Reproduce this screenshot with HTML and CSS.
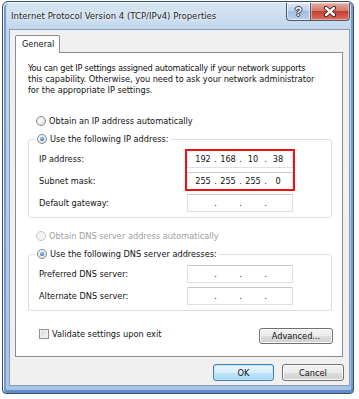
FILE: index.html
```html
<!DOCTYPE html>
<html>
<head>
<meta charset="UTF-8"/>
<title>Internet Protocol Version 4 (TCP/IPv4) Properties</title>
<link rel="stylesheet" href="styles.css">
</head>
<body>
<div class="window">
  <div class="titlebar">
    <span class="title">Internet Protocol Version 4 (TCP/IPv4) Properties</span>
    <div class="caption-btns">
      <span class="cap help">?</span>
      <span class="cap close">
        <svg width="14" height="11" viewBox="0 0 14 11"><path d="M3 2 L11 9 M11 2 L3 9" stroke="#3b1a1a" stroke-width="4.2" stroke-linecap="round"/><path d="M3 2 L11 9 M11 2 L3 9" stroke="#fff" stroke-width="2.4" stroke-linecap="round"/></svg>
      </span>
    </div>
  </div>

  <div class="client">
    <div class="tabs"><span class="tab">General</span></div>
    <div class="panel">
      <p class="intro"><span class="tight">You can get IP settings assigned automatically if your network supports</span><br>this capability. Otherwise, you need to ask your network administrator<br>for the appropriate IP settings.</p>

      <div class="opt ip-auto"><span class="radio"></span>Obtain an IP address automatically</div>
      <fieldset class="group">
        <legend class="opt"><span class="radio on"></span>Use the following IP address:</legend>
        <div class="grid">
          <span class="lbl">IP address:</span>
          <div class="ip"><span class="oct">192</span><span class="dot">.</span><span class="oct">168</span><span class="dot">.</span><span class="oct">10</span><span class="dot">.</span><span class="oct">38</span></div>
          <span class="lbl">Subnet mask:</span>
          <div class="ip"><span class="oct">255</span><span class="dot">.</span><span class="oct">255</span><span class="dot">.</span><span class="oct">255</span><span class="dot">.</span><span class="oct">0</span></div>
          <span class="lbl">Default gateway:</span>
          <div class="ip"><span class="oct"></span><span class="dot">.</span><span class="oct"></span><span class="dot">.</span><span class="oct"></span><span class="dot">.</span><span class="oct"></span></div>
          <div class="mark"></div>
        </div>
      </fieldset>

      <div class="opt off dns-auto"><span class="radio"></span>Obtain DNS server address automatically</div>
      <fieldset class="group">
        <legend class="opt"><span class="radio on"></span>Use the following DNS server addresses:</legend>
        <div class="grid">
          <span class="lbl">Preferred DNS server:</span>
          <div class="ip"><span class="oct"></span><span class="dot">.</span><span class="oct"></span><span class="dot">.</span><span class="oct"></span><span class="dot">.</span><span class="oct"></span></div>
          <span class="lbl">Alternate DNS server:</span>
          <div class="ip"><span class="oct"></span><span class="dot">.</span><span class="oct"></span><span class="dot">.</span><span class="oct"></span><span class="dot">.</span><span class="oct"></span></div>
        </div>
      </fieldset>

      <div class="bottom-row">
        <div class="opt check-row"><span class="check"></span>Validate settings upon exit</div>
        <button class="btn adv">Advanced...</button>
      </div>
    </div>

    <div class="dlg-btns">
      <button class="btn ok">OK</button>
      <button class="btn">Cancel</button>
    </div>
  </div>
</div>
</body>
</html>
```

FILE: styles.css
```css
* {
	box-sizing: border-box;
}
body {
	margin: 0;
	background: #fff;
	font-family: "DejaVu Sans Condensed", "Liberation Sans", sans-serif;
	font-size: 9.15px;
	color: #111;
}

/* window frame */
.window {
	width: 352px;
	height: 393px;
	margin: 1px 0 0 2px;
	padding: 0 3px 7px 6px;
	border: 1px solid #3d4d60;
	border-radius: 6px 6px 4px 4px;
	background: linear-gradient(#d8e6f4, #c3d7ed 26px, #b3cbe8 60%, #a8c3e5);
	box-shadow: inset 1px 1px 0 #eef4fb, inset 4px 0 0 -1px #6f9bd0, inset 0 -4px 0 -1px #5d8dcc, inset -3px 0 0 -1px #6f9bd0;
	display: flex;
	flex-direction: column;
}
.titlebar {
	height: 27px;
	display: flex;
	align-items: flex-start;
	padding-left: 2px;
}
.title {
	font-size: 9.5px;
	color: #222;
	line-height: 12px;
	margin-top: 8px;
	text-shadow: 0 0 6px #fff, 0 0 3px #fff;
}
.caption-btns {
	margin-left: auto;
	margin-top: 1px;
	display: flex;
}
.cap {
	height: 18px;
	display: flex;
	align-items: center;
	justify-content: center;
	border: 1px solid #4b5a6e;
	border-top: none;
}
.help {
	width: 24px;
	border-radius: 0 0 0 4px;
	border-right: none;
	background: linear-gradient(#dbe7f4, #bcd0e8 45%, #a7bfdd 50%, #b9cfe8);
	box-shadow: inset 0 0 0 1px rgba(255,255,255,.6);
	color: #fff;
	font: bold 12px "Liberation Sans", sans-serif;
	text-shadow: 0 0 1px #1f2f45, 1px 0 0 #2d3e55, -1px 0 0 #2d3e55, 0 1px 0 #2d3e55, 0 -1px 0 #2d3e55;
}
.close {
	width: 40px;
	border-radius: 0 0 4px 0;
	background: linear-gradient(#e8aa9f, #d47a6b 45%, #c2402f 50%, #d9725c);
	box-shadow: inset 0 0 0 1px rgba(255,220,210,.5);
}

/* client area */
.client {
	height: 357px;
	border: 1px solid #8b9db5;
	background: #f0f0f0;
	padding: 5px 5px 4px 5px;
	display: flex;
	flex-direction: column;
}
.tabs {
	display: flex;
}
.tab {
	width: 45px;
	height: 18px;
	margin-bottom: -1px;
	border: 1px solid #898c95;
	border-bottom: none;
	border-radius: 2px 2px 0 0;
	background: #fff;
	line-height: 16px;
	padding-left: 6px;
	position: relative;
	z-index: 1;
}
.panel {
	margin-right: 1px;
	height: 306px;
	border: 1px solid #898c95;
	background: #fff;
	padding: 10px 9px 0 12px;
}
.intro {
	margin: 0;
	line-height: 11px;
	height: 33px;
	white-space: nowrap;
	letter-spacing: -0.04px;
}
.tight {
	letter-spacing: -0.23px;
}

/* radios and checkbox */
.opt {
	height: 14px;
	line-height: 14px;
	display: flex;
	align-items: center;
	white-space: nowrap;
}
.ip-auto {
	margin-top: 18px;
	padding-left: 8px;
}
.radio {
	width: 10px;
	height: 10px;
	border-radius: 50%;
	border: 1px solid #8a8a8a;
	background: radial-gradient(circle at 40% 35%, #fff, #e2e2e2 70%, #cfcfcf);
	margin-right: 3px;
	position: relative;
	flex: none;
}
.radio.on::after {
	content: "";
	position: absolute;
	left: 2px;
	top: 2px;
	width: 4px;
	height: 4px;
	border-radius: 50%;
	background: radial-gradient(circle at 40% 35%, #9fd0f7, #2a6fc0 70%, #1a4f98);
}
.off {
	color: #a0a0a0;
}
.off .radio {
	border-color: #c8c8c8;
	background: #f4f4f4;
}
.dns-auto {
	margin-top: 11px;
	padding-left: 8px;
}

/* group boxes */
.group {
	margin: 4px 0 0 0;
	width: 304px;
	border: 1px solid #d5dfe5;
	border-radius: 3px;
	padding: 4px 0 5px 10px;
}
.group legend {
	padding: 0 2px;
	margin-left: -4px;
}
.grid {
	display: grid;
	grid-template-columns: 148px 106px;
	grid-auto-rows: 18px;
	row-gap: 4px;
	align-items: center;
}
.lbl {
	grid-column: 1;
}
.ip {
	grid-column: 2;
	height: 18px;
	border: 1px solid #dde1e6;
	border-top-color: #c5cad1;
	display: flex;
	padding-left: 5px;
	line-height: 16px;
}
.grid > :nth-child(1), .grid > :nth-child(2) { grid-row: 1; }
.grid > :nth-child(3), .grid > :nth-child(4) { grid-row: 2; }
.grid > :nth-child(5), .grid > :nth-child(6) { grid-row: 3; }
.oct {
	width: 20px;
	text-align: center;
}
.dot {
	width: 5px;
	text-align: center;
}
.mark {
	grid-row: 1 / 3;
	grid-column: 2;
	align-self: stretch;
	margin: -1px -2px;
	border: 2px solid #ee1111;
}

/* bottom */
.bottom-row {
	margin-top: 17px;
	display: flex;
	align-items: flex-start;
	justify-content: space-between;
}
.check-row {
	margin-top: -1px;
	padding-left: 11px;
}
.check {
	width: 10px;
	height: 10px;
	border: 1px solid #8f8f8f;
	background: linear-gradient(135deg, #d8d8d8, #f6f6f6);
	box-shadow: inset 0 0 0 1px #f2f2f2;
	margin-right: 3px;
}
.btn {
	font-family: inherit;
	font-size: 9.15px;
	color: #111;
	height: 17px;
	padding: 0;
	border: 1px solid #707070;
	border-radius: 3px;
	background: linear-gradient(#f2f2f2, #ebebeb 50%, #dddddd 51%, #cfcfcf);
	box-shadow: inset 0 0 0 1px #fcfcfc;
	width: 62px;
}
.adv {
	width: 74px;
	height: 16px;
}
.dlg-btns {
	margin-top: 7px;
	display: flex;
	justify-content: flex-end;
	gap: 8px;
}
.ok {
	width: 61px;
	border-color: #3c7fb1;
	background: linear-gradient(#eaf6fd, #d9f0fc 50%, #bee6fd 51%, #a7d9f5);
	box-shadow: inset 0 0 0 1px #c4e5f6;
}
```
